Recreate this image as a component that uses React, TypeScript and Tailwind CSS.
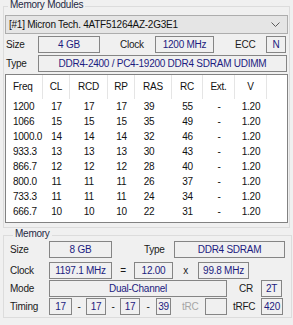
import React from "react";

const rows = [
  ["1200", "17", "17", "17", "39", "55", "-", "1.20"],
  ["1066", "15", "15", "15", "35", "49", "-", "1.20"],
  ["1000.0", "14", "14", "14", "32", "46", "-", "1.20"],
  ["933.3", "13", "13", "13", "30", "43", "-", "1.20"],
  ["866.7", "12", "12", "12", "28", "40", "-", "1.20"],
  ["800.0", "11", "11", "11", "26", "37", "-", "1.20"],
  ["733.3", "11", "11", "11", "24", "34", "-", "1.20"],
  ["666.7", "10", "10", "10", "22", "31", "-", "1.20"],
];

const cols = "grid grid-cols-[37px_27px_38px_27px_37px_31px_32px_32px_1fr]";

function Box({ children, className = "" }: { children?: React.ReactNode; className?: string }) {
  return (
    <div
      className={`flex h-[17px] shrink-0 items-center justify-center whitespace-nowrap border border-[#858585] text-[#1c1c80] ${className}`}
    >
      {children}
    </div>
  );
}

function Label({ children, className = "" }: { children: React.ReactNode; className?: string }) {
  return <span className={`shrink-0 whitespace-nowrap text-[#1a1a1a] ${className}`}>{children}</span>;
}

export default function App() {
  return (
    <div className="h-[325px] w-[293px] overflow-hidden bg-[#f0f0f0] font-['Liberation_Sans',Arial,sans-serif] text-[10px] leading-none tracking-[-0.25px]">
      <fieldset className="mx-[3px] border border-[#dcdcdc] px-[1px] pb-[4px]">
        <legend className="ml-[3px] h-[12px] px-[2px] text-[#1f2a44]">Memory Modules</legend>

        <div className="mt-[3px] flex h-[19px] items-center justify-between border border-[#adadad] bg-[#e5e5e5] pl-[3px] pr-[7px] text-[#111]">
          <span>[#1] Micron Tech. 4ATF51264AZ-2G3E1</span>
          <svg width="9" height="5" viewBox="0 0 9 5" fill="none">
            <path d="M0.5 0.5 L4.5 4.5 L8.5 0.5" stroke="#5a5a5a" strokeWidth="1" />
          </svg>
        </div>

        <div className="mt-[2px] flex items-center pl-[1px]">
          <Label className="w-[32px]">Size</Label>
          <Box className="w-[62px]">4 GB</Box>
          <Label className="ml-[20px] w-[35px]">Clock</Label>
          <Box className="w-[59px]">1200 MHz</Box>
          <Label className="ml-[21px] w-[31px]">ECC</Label>
          <Box className="w-[20px]">N</Box>
        </div>

        <div className="mt-[2px] flex items-center pl-[1px]">
          <Label className="w-[32px]">Type</Label>
          <Box className="w-[249px]">DDR4-2400 / PC4-19200 DDR4 SDRAM UDIMM</Box>
        </div>

        <div className="mt-[2px] h-[149px] border border-[#828282] bg-white text-[#111]">
          <div className={`${cols} h-[24px] items-center`}>
            {["Freq", "CL", "RCD", "RP", "RAS", "RC", "Ext.", "V"].map((h, i) => (
              <div
                key={h}
                className={`flex h-full items-center border-r border-[#e5e5e5] ${i === 0 ? "pl-[7px]" : "justify-center"}`}
              >
                {h}
              </div>
            ))}
            <div />
          </div>
          {rows.map((r) => (
            <div key={r[0]} className={`${cols} h-[15px] items-center`}>
              {r.map((c, i) => (
                <div
                  key={i}
                  className={i === 0 ? "pl-[7px]" : i === 4 ? "pr-[9px] text-center" : "text-center"}
                >
                  {c}
                </div>
              ))}
              <div />
            </div>
          ))}
        </div>
      </fieldset>

      <fieldset className="mx-[3px] mt-[1px] border border-[#dcdcdc] px-[6px] pb-[2px]">
        <legend className="ml-[3px] h-[12px] px-[2px] text-[#1f2a44]">Memory</legend>

        <div className="flex items-center">
          <Label className="w-[39px]">Size</Label>
          <Box className="w-[63px]">8 GB</Box>
          <Label className="ml-[32px] w-[30px]">Type</Label>
          <Box className="w-[111px]">DDR4 SDRAM</Box>
        </div>

        <div className="mt-[4px] flex items-center">
          <Label className="w-[39px]">Clock</Label>
          <Box className="w-[63px]">1197.1 MHz</Box>
          <Label className="w-[22px] text-center">=</Label>
          <Box className="w-[39px]">12.00</Box>
          <Label className="w-[25px] text-center">x</Label>
          <Box className="w-[51px]">99.8 MHz</Box>
        </div>

        <div className="mt-[1px] flex items-center">
          <Label className="w-[39px]">Mode</Label>
          <Box className="w-[178px]">Dual-Channel</Box>
          <Label className="w-[34px] pl-[12px]">CR</Label>
          <Box className="w-[21px]">2T</Box>
        </div>

        <div className="mt-[1px] flex items-center">
          <Label className="w-[39px]">Timing</Label>
          <Box className="w-[23px]">17</Box>
          <Label className="w-[14px] text-center">-</Label>
          <Box className="w-[20px]">17</Box>
          <Label className="w-[14px] text-center">-</Label>
          <Box className="w-[20px]">17</Box>
          <Label className="w-[16px] text-center">-</Label>
          <Box className="w-[15px]">39</Box>
          <span className="w-[34px] shrink-0 pl-[11px] text-[#a6a6a6]">tRC</span>
          <Box className="w-[22px]" />
          <Label className="w-[34px] pl-[6px]">tRFC</Label>
          <Box className="w-[22px]">420</Box>
        </div>
      </fieldset>
    </div>
  );
}
